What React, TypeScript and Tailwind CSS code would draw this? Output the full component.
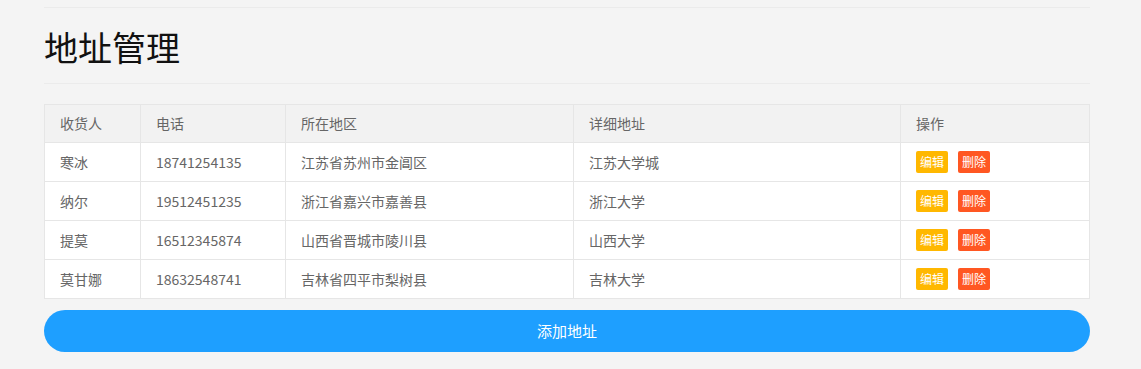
import React from "react";

interface Address {
  name: string;
  phone: string;
  region: string;
  detail: string;
}

const addresses: Address[] = [
  { name: "寒冰", phone: "18741254135", region: "江苏省苏州市金阊区", detail: "江苏大学城" },
  { name: "纳尔", phone: "19512451235", region: "浙江省嘉兴市嘉善县", detail: "浙江大学" },
  { name: "提莫", phone: "16512345874", region: "山西省晋城市陵川县", detail: "山西大学" },
  { name: "莫甘娜", phone: "18632548741", region: "吉林省四平市梨树县", detail: "吉林大学" },
];

const headers = ["收货人", "电话", "所在地区", "详细地址", "操作"];

export default function App() {
  return (
    <div
      className="min-h-[369px] bg-[#f4f4f4] px-[44px] pt-[7px] text-[#666]"
      style={{ fontFamily: '"Microsoft YaHei", "Noto Sans CJK SC", "Noto Sans", sans-serif' }}
    >
      <div className="w-[1046px]">
        <div className="border-t border-[#ebebeb]" />

        {/* Title */}
        <div className="flex h-[76px] items-center border-b border-[#ebebeb] pt-[2px]">
          <h1 className="text-[34px] font-normal leading-none text-[#111]">地址管理</h1>
        </div>

        {/* Table */}
        <table className="mt-[20px] w-[1046px] table-fixed border-collapse border border-[#e6e6e6] bg-white text-[14px]">
          <colgroup>
            <col className="w-[96px]" />
            <col className="w-[145px]" />
            <col className="w-[288px]" />
            <col className="w-[327px]" />
            <col />
          </colgroup>
          <thead>
            <tr className="bg-[#f2f2f2]">
              {headers.map((h) => (
                <th
                  key={h}
                  className="h-[38px] border border-[#e6e6e6] px-[15px] text-left font-normal"
                >
                  {h}
                </th>
              ))}
            </tr>
          </thead>
          <tbody>
            {addresses.map((a) => (
              <tr key={a.name}>
                <td className="h-[39px] border border-[#e6e6e6] px-[15px]">{a.name}</td>
                <td className="h-[39px] border border-[#e6e6e6] px-[15px]">{a.phone}</td>
                <td className="h-[39px] border border-[#e6e6e6] px-[15px]">{a.region}</td>
                <td className="h-[39px] border border-[#e6e6e6] px-[15px]">{a.detail}</td>
                <td className="h-[39px] border border-[#e6e6e6] px-[15px]">
                  <div className="flex gap-[10px]">
                    <button className="h-[22px] rounded-[2px] bg-[#FFB800] px-[4px] text-[12px] leading-[22px] text-white">
                      编辑
                    </button>
                    <button className="h-[22px] rounded-[2px] bg-[#FF5722] px-[4px] text-[12px] leading-[22px] text-white">
                      删除
                    </button>
                  </div>
                </td>
              </tr>
            ))}
          </tbody>
        </table>

        {/* Add button */}
        <button className="mt-[11px] h-[42px] w-[1046px] rounded-full bg-[#1E9FFF] text-[15px] text-white">
          添加地址
        </button>
      </div>
    </div>
  );
}
